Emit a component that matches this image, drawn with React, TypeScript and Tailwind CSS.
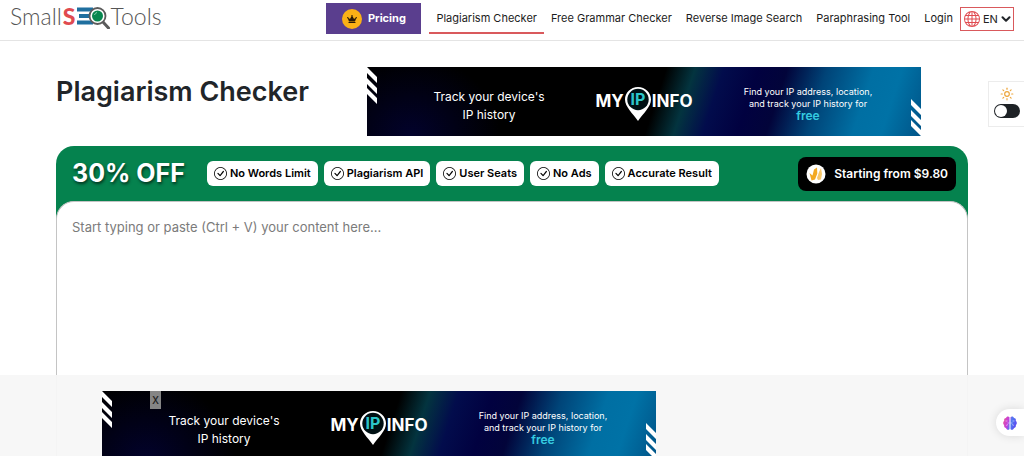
import { useState } from 'react'
import { BsCheckCircle, BsGlobe } from 'react-icons/bs'
import { FaCrown } from 'react-icons/fa'
import { ChevronDown, Sun } from 'lucide-react'

const navLinks = [
  { label: 'Plagiarism Checker', active: true },
  { label: 'Free Grammar Checker', active: false },
  { label: 'Reverse Image Search', active: false },
  { label: 'Paraphrasing Tool', active: false },
  { label: 'Login', active: false },
]

const features = ['No Words Limit', 'Plagiarism API', 'User Seats', 'No Ads', 'Accurate Result']

function Logo() {
  return (
    <a
      href="#"
      aria-label="SmallSEOTools"
      className="flex items-center font-['Lato'] text-[23px] leading-8 font-light text-[#555]"
    >
      <span>Small</span>
      <span className="pl-px font-black text-[#e04b50]">S</span>
      <svg width="35" height="26" viewBox="0 0 35 26" className="shrink-0">
        {/* Blue bars running into the lens */}
        <path d="M1 6.500h16M3 13h11M1 19.500h16" stroke="#1f6f9f" strokeWidth="3.800" fill="none" />
        <path d="M27 19l5.500 6" stroke="#5b5b5b" strokeWidth="3" strokeLinecap="round" />
        <circle cx="21.500" cy="13" r="8" fill="#fff" stroke="#5b5b5b" strokeWidth="1.800" />
        <circle cx="21.500" cy="13" r="5.500" fill="#07874f" />
        <path d="M18.500 12a3.500 3.500 0 0 1 2.500-2.500" stroke="#8fd0b2" strokeWidth="1" fill="none" />
      </svg>
      <span>Tools</span>
    </a>
  )
}

function Header() {
  return (
    <header className="flex items-start justify-between border-b border-[#e4e4e4] bg-white px-[10px]">
      <Logo />
      <div className="flex h-10 items-start">
        <a
          href="#"
          className="mt-[3px] mr-2 flex h-[31px] w-[95px] items-center justify-center gap-1.5 bg-[#5a3e8e] text-[11px] font-bold text-white"
        >
          <span className="flex size-5 items-center justify-center rounded-full bg-[#fbb116] text-[#2a1a05]">
            <FaCrown size={10} />
          </span>
          Pricing
        </a>
        <nav className="flex items-start">
          {navLinks.map(link => (
            <a
              key={link.label}
              href="#"
              className={`h-[34px] border-b-2 px-[7px] text-[11px] leading-9 whitespace-nowrap text-[#1c1c1c] ${
                link.active ? 'border-[#d9595c]' : 'border-transparent'
              }`}
            >
              {link.label}
            </a>
          ))}
        </nav>
        <div className="relative mt-[7px] flex h-6 w-[54px] items-center border border-[#d9595c] pl-[3px]">
          <BsGlobe size={16} className="shrink-0 text-[#e04b50]" />
          <select
            aria-label="Language"
            className="w-full appearance-none bg-transparent pl-[3px] text-[11px] text-[#222] outline-none"
          >
            <option>EN</option>
          </select>
          <ChevronDown size={14} strokeWidth={3.5} className="pointer-events-none absolute right-0" />
        </div>
      </div>
    </header>
  )
}

function Stripes({ className }: { className: string }) {
  return (
    <svg width="10" height="37" viewBox="0 0 10 37" fill="#fff" className={className}>
      <path d="M0 0l10 10v6L0 6zM0 11l10 10v6L0 17zM0 21l10 10v6L0 27z" />
    </svg>
  )
}

function Banner() {
  return (
    <a
      href="#"
      className="relative flex h-[69px] w-[554px] shrink-0 items-center overflow-hidden bg-black bg-[radial-gradient(ellipse_90px_80px_at_8%_100%,#02022c_0%,transparent_100%),linear-gradient(108deg,#000_0%,#000_52%,#03343f_57%,#020c4c_62%,#010140_68%,#02043a_73%,#004478_80%,#006fa3_88%,#0072a6_93%,#005488_100%)] text-white"
    >
      <Stripes className="absolute top-0 left-0" />
      <Stripes className="absolute right-0 bottom-0" />
      <p className="ml-[52px] w-[140px] pt-2 text-center text-[12px] leading-[18px]">
        Track your device's
        <br />
        IP history
      </p>
      <div className="ml-9 flex w-[98px] items-center justify-center text-[17px] font-bold">
        MY
        <svg width="28" height="36" viewBox="0 0 28 36" className="mt-1 shrink-0">
          <path d="M14 1C6.800 1 1 6.600 1 13.500 1 21 9 27.500 14 35c5-7.500 13-14 13-21.500C27 6.600 21.200 1 14 1z" fill="#fff" />
          <circle cx="14" cy="13.500" r="10.700" fill="#001014" />
          <text x="14" y="19" textAnchor="middle" fontFamily="Inter, sans-serif" fontWeight="700" fontSize="16" fill="#2cc5c9">IP</text>
        </svg>
        INFO
      </div>
      <p className="ml-10 w-[150px] pt-1.5 text-center text-[9px] leading-3">
        Find your IP address, location,
        <br />
        and track your IP history for
        <br />
        <span className="text-[12px] font-semibold text-[#35cbe0]">free</span>
      </p>
    </a>
  )
}

function CoinIcon() {
  return (
    <svg width="20" height="20" viewBox="0 0 20 20">
      <circle cx="10" cy="10" r="9.500" fill="#fff" />
      <path d="M3.500 9l3 2.500L8 5.500l3-2 .3 6-2.300 6-3.500 1z" fill="#f3a922" />
      <path d="M11 14l2-6 2-4 1 6-1 5.500-3 .5z" fill="#f8c76a" />
    </svg>
  )
}

function BrainIcon() {
  return (
    <svg width="14" height="14" viewBox="0 0 14 14">
      <defs>
        <linearGradient id="brain" x1="0" y1="0" x2="14" y2="4" gradientUnits="userSpaceOnUse">
          <stop offset="0" stopColor="#f0558c" />
          <stop offset="0.450" stopColor="#c03fe0" />
          <stop offset="0.650" stopColor="#4f7df0" />
          <stop offset="1" stopColor="#5b4df0" />
        </linearGradient>
      </defs>
      <g fill="url(#brain)">
        <path d="M6.500 1.200C5.500-.2 3.300.3 3 2 1.500 2 .7 3.600 1.300 4.800-.2 5.700-.2 8 1.200 9c-.5 1.500.4 2.800 1.800 3 .4 1.900 2.700 2.400 3.500.9z" />
        <path d="M7.500 1.200C8.500-.2 10.700.3 11 2c1.500 0 2.300 1.600 1.700 2.800 1.500.9 1.500 3.200.1 4.200.5 1.500-.4 2.800-1.800 3-.4 1.900-2.700 2.400-3.500.9z" />
      </g>
      <path d="M2.500 5h2M3 9.500l2-1M6.500 7h-2M11.500 5h-2M11 9.500l-2-1M7.500 7h2" stroke="#fff" strokeOpacity="0.600" strokeWidth="0.800" />
    </svg>
  )
}

export default function App() {
  const [dark, setDark] = useState(false)
  const [showAd, setShowAd] = useState(true)

  return (
    <div className="relative flex h-screen flex-col overflow-hidden bg-white font-['Inter',sans-serif] text-[#212529]">
      <Header />

      <main className="mx-14 flex flex-1 flex-col pt-[26px]">
        <div className="flex items-center">
          <h1 className="w-[311px] shrink-0 pb-5 text-[27px] leading-8 font-semibold whitespace-nowrap">
            Plagiarism Checker
          </h1>
          <Banner />
        </div>

        <section className="mt-2.5 flex flex-1 flex-col rounded-t-[18px] bg-[linear-gradient(#05824e_80px,#fff_80px)]">
          <div className="flex h-[55px] shrink-0 items-center pr-3 pl-4">
            <strong className="mr-[22px] text-[25px] font-bold whitespace-nowrap text-white [text-shadow:1px_2px_3px_rgba(0,0,0,0.6)]">
              30% OFF
            </strong>
            <ul className="flex gap-1.5">
              {features.map(feature => (
                <li
                  key={feature}
                  className="flex h-[25px] items-center gap-[3px] rounded-md bg-white px-[7px] text-[11px] font-semibold whitespace-nowrap text-black"
                >
                  <BsCheckCircle size={13} />
                  {feature}
                </li>
              ))}
            </ul>
            <button className="ml-auto flex h-[34px] items-center gap-2 rounded-lg bg-black px-2 text-[12px] font-semibold whitespace-nowrap text-white">
              <CoinIcon />
              Starting from $9.80
            </button>
          </div>
          <textarea
            aria-label="Content to check"
            placeholder="Start typing or paste (Ctrl + V) your content here..."
            className="w-full flex-1 resize-none rounded-t-[18px] border border-b-0 border-[#c4c4c4] bg-white px-[15px] py-4 text-[13px] leading-[18px] outline-none placeholder:text-[#7b7b7b]"
          />
        </section>
      </main>

      {/* Theme switch */}
      <label className="absolute top-[81px] right-0 flex h-[46px] w-9 flex-col items-center gap-[3px] border border-r-0 border-[#ececec] bg-white pt-[5px]">
        <Sun size={14} strokeWidth={2} className="text-[#eda53a]" />
        <input
          type="checkbox"
          aria-label="Dark mode"
          checked={dark}
          onChange={e => setDark(e.target.checked)}
          className="h-[14px] w-[26px] appearance-none rounded-full bg-[#1e2226] p-px before:block before:size-3 before:rounded-full before:bg-white checked:before:translate-x-3"
        />
      </label>

      {/* Sticky ad */}
      {showAd && (
        <div className="absolute inset-x-0 bottom-0 h-[81px] overflow-hidden bg-[#f7f7f7]/95 pt-4 pl-[102px]">
          <div className="relative w-[554px]">
            <Banner />
            <button
              aria-label="Close ad"
              onClick={() => setShowAd(false)}
              className="absolute top-0 left-12 flex h-[18px] w-[11px] items-center justify-center bg-[#858585] text-[13px] text-[#222]"
            >
              x
            </button>
          </div>
        </div>
      )}

      <button
        aria-label="Open assistant"
        className="absolute right-0 bottom-5 flex h-[27px] w-7 items-center justify-center rounded-l-full bg-white shadow-[0_0_10px_rgba(0,0,0,0.12)]"
      >
        <BrainIcon />
      </button>
    </div>
  )
}
